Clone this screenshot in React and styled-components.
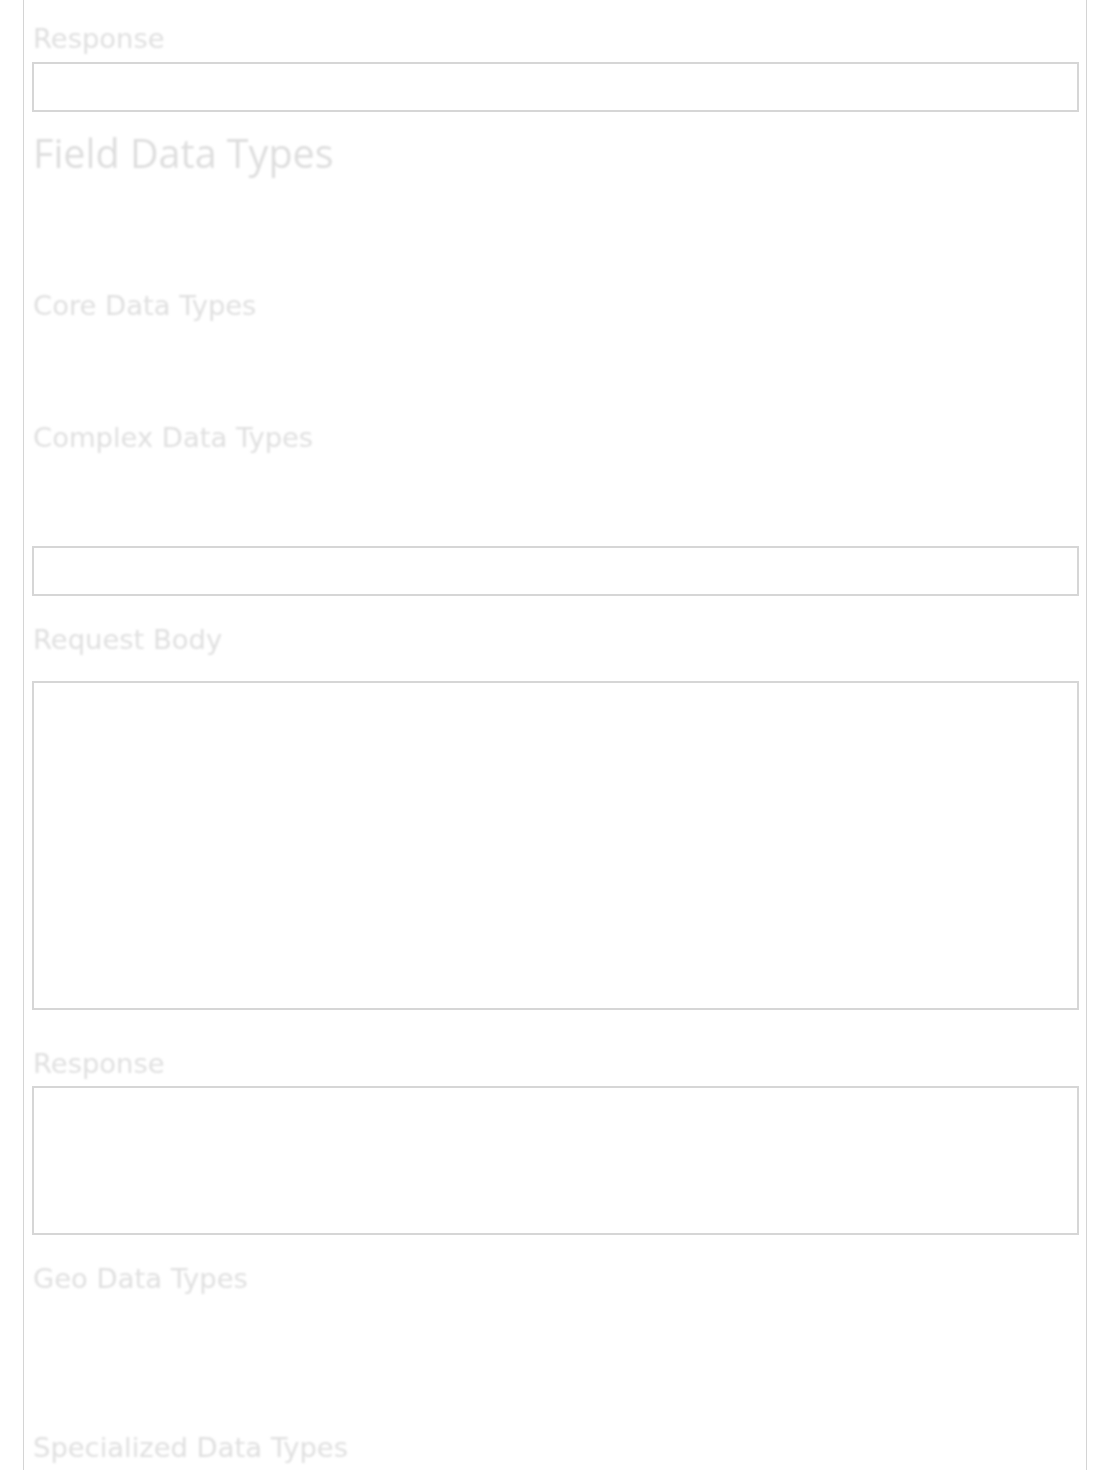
import React from "react";
import styled, { createGlobalStyle } from "styled-components";

const GlobalStyle = createGlobalStyle`
  html, body {
    margin: 0;
    padding: 0;
    background: #fff;
  }
`;

const Page = styled.div`
  box-sizing: border-box;
  width: 1064px;
  min-height: 1470px;
  margin-left: 23px;
  padding: 0 7px 0 8px;
  border-left: 1px solid #d4d4d4;
  border-right: 1px solid #d4d4d4;
  display: flex;
  flex-direction: column;
  overflow: hidden;
`;

const Label = styled.div`
  margin-top: ${({ $mt }) => $mt || 0}px;
  padding-left: 1px;
  font-family: "DejaVu Sans", Verdana, sans-serif;
  font-size: 27.4px;
  line-height: 32px;
  color: #e0e0e0;
  filter: blur(1px);
  white-space: nowrap;
`;

const Heading = styled.h1`
  margin: ${({ $mt }) => $mt || 0}px 0 0;
  padding-left: 1px;
  font-family: "Open Sans", sans-serif;
  font-weight: 400;
  font-size: 39.5px;
  line-height: 48px;
  color: #dedede;
  filter: blur(1px);
`;

const Field = styled.div`
  box-sizing: border-box;
  width: 100%;
  height: ${({ $h }) => $h}px;
  margin-top: ${({ $mt }) => $mt || 0}px;
  border: 2px solid #d6d6d6;
  background: #fff;
  flex-shrink: 0;
`;

export default function App() {
  return (
    <>
      <GlobalStyle />
      <Page>
        <Label $mt={23}>Response</Label>
        <Field $h={50} $mt={6.5} />
        <Heading $mt={17.5}>Field Data Types</Heading>
        <Label $mt={112.5}>Core Data Types</Label>
        <Label $mt={100}>Complex Data Types</Label>
        <Field $h={50} $mt={92.3} />
        <Label $mt={28}>Request Body</Label>
        <Field $h={329} $mt={25} />
        <Label $mt={38}>Response</Label>
        <Field $h={148.5} $mt={6.7} />
        <Label $mt={27.7}>Geo Data Types</Label>
        <Label $mt={137}>Specialized Data Types</Label>
      </Page>
    </>
  );
}
